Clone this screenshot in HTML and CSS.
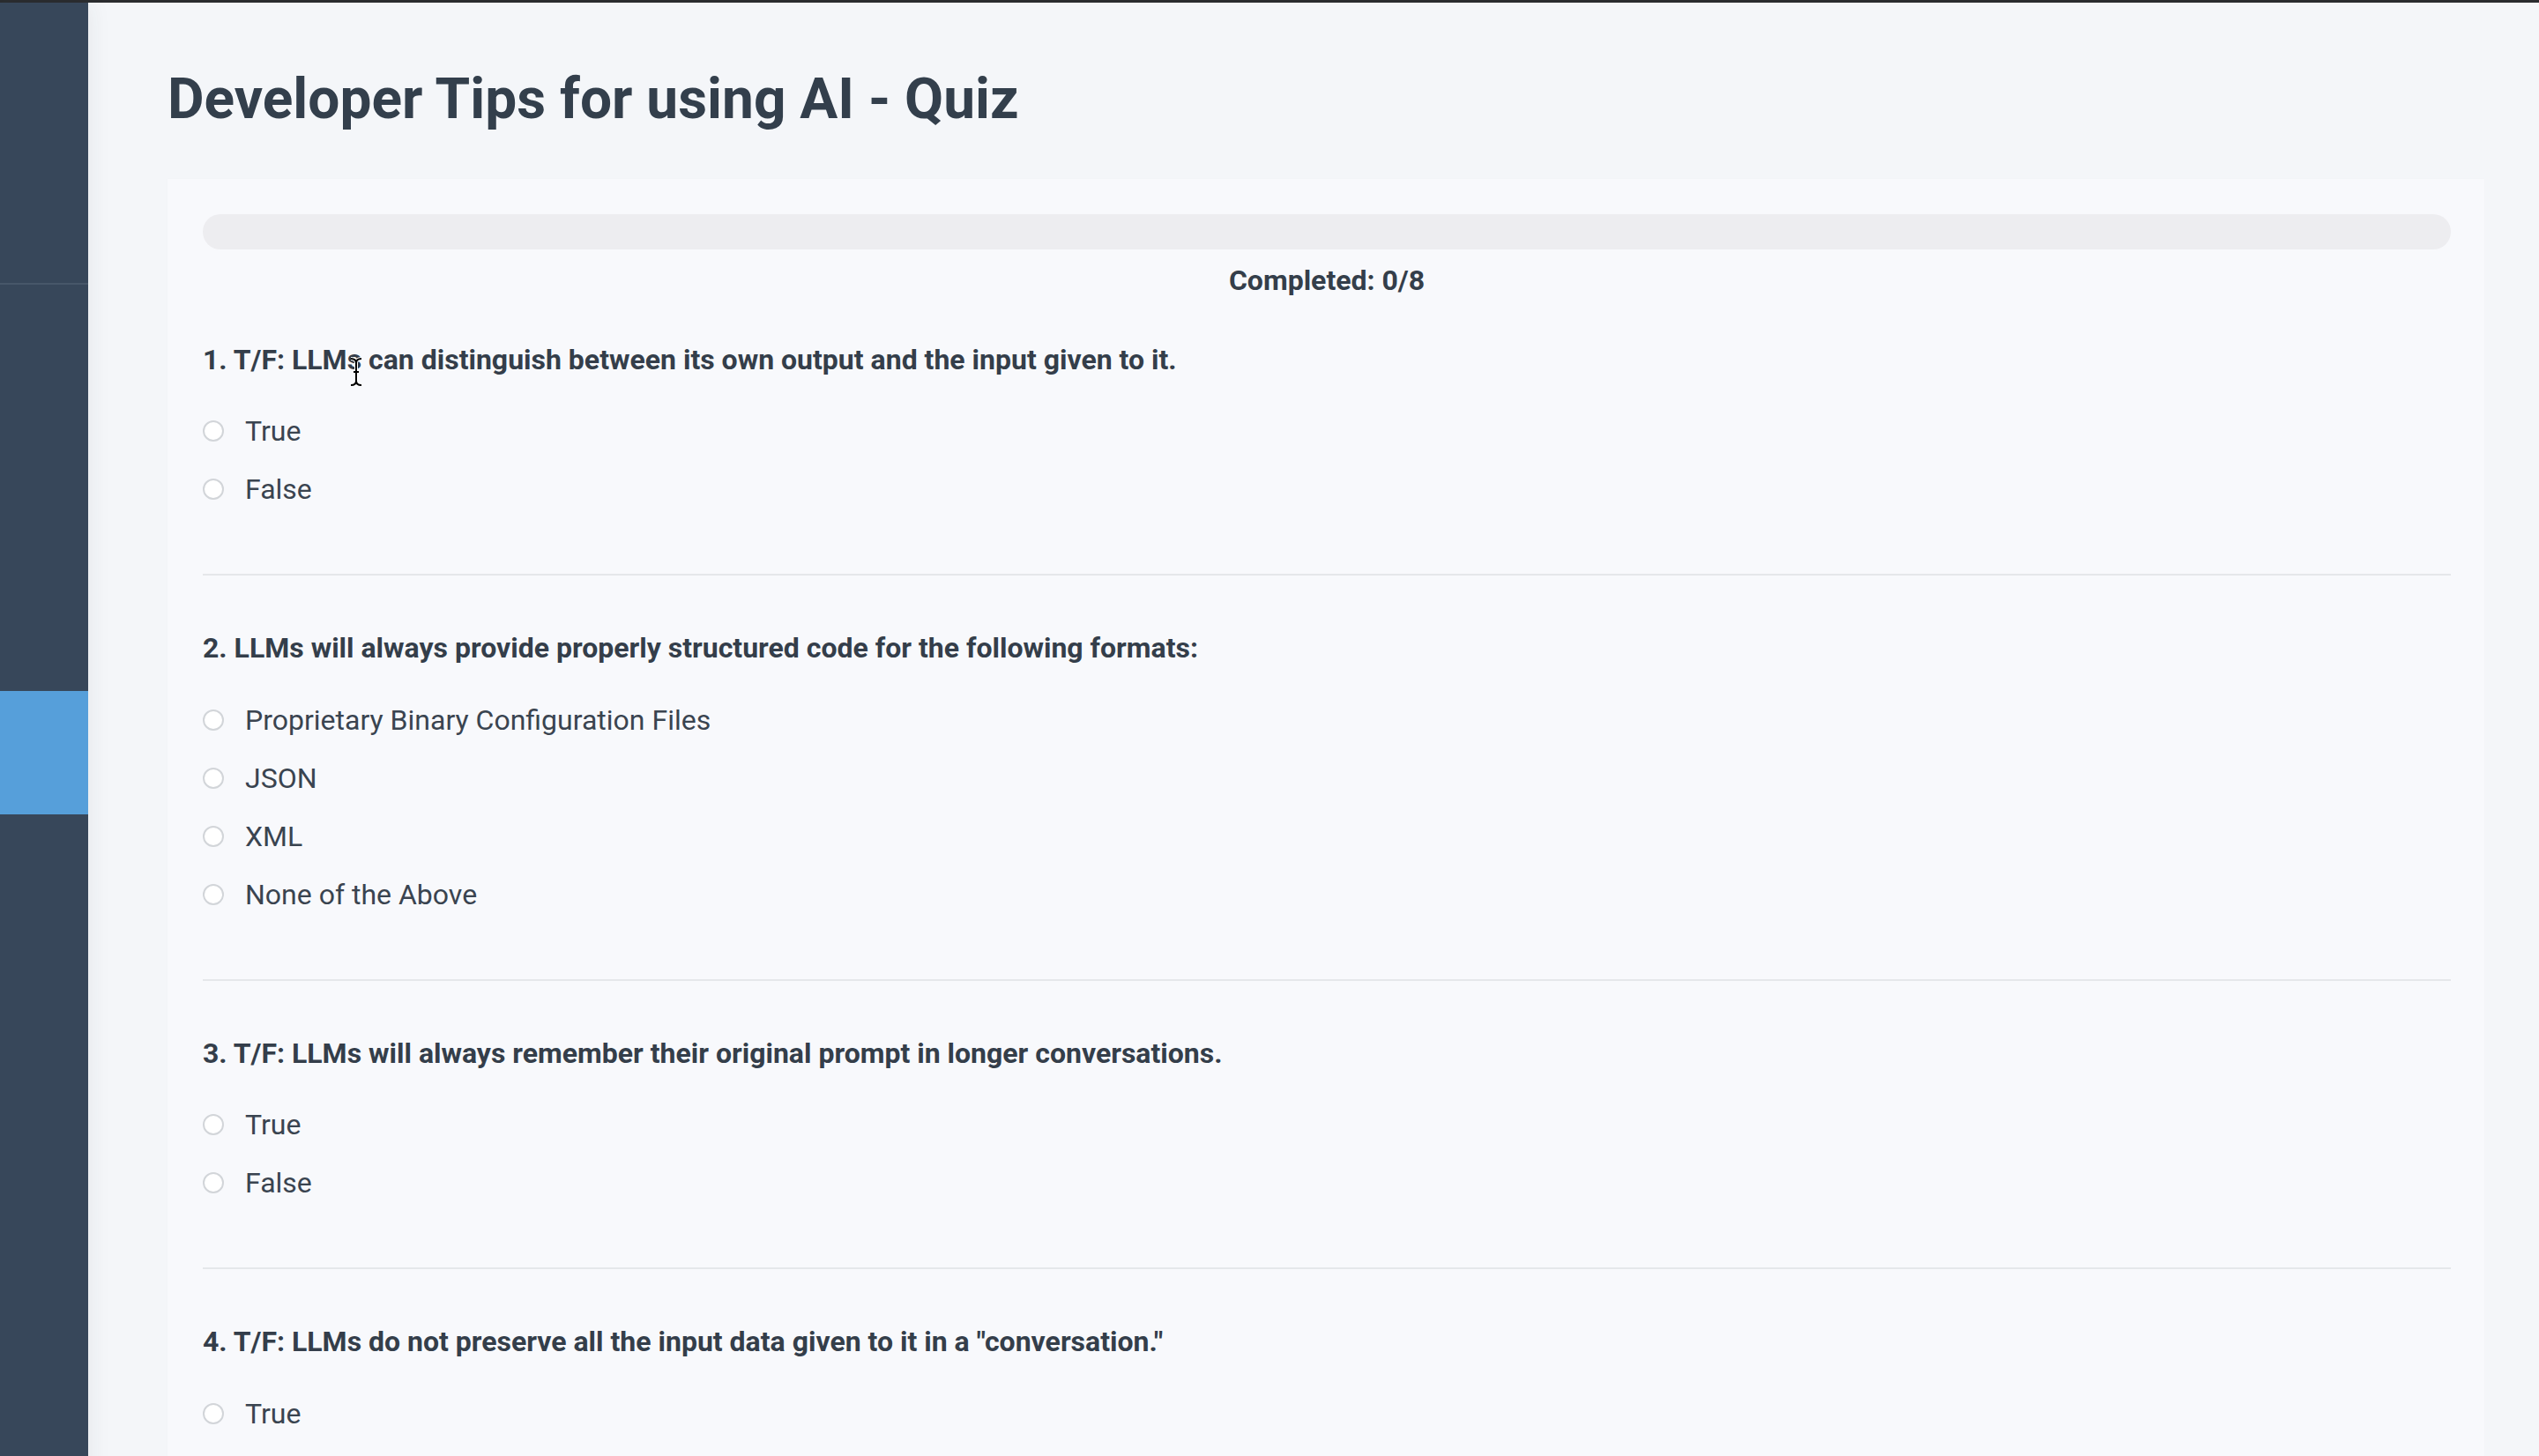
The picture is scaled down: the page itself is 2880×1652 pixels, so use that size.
FILE: index.html
```html
<!DOCTYPE html>
<html lang="en">
<head>
<meta charset="utf-8">
<title>Developer Tips for using AI - Quiz</title>
<link rel="stylesheet" href="styles.css">
</head>
<body>
<div class="app">
  <aside class="sidebar">
    <div class="side-head"></div>
    <nav class="side-nav">
      <div class="side-item active"></div>
    </nav>
  </aside>
  <main class="main">
    <h1 class="page-title">Developer Tips for using AI - Quiz</h1>
    <section class="quiz-card">
      <div class="progress-track"><div class="progress-fill" style="width:0%"></div></div>
      <p class="progress-text">Completed: 0/8</p>
      <div class="questions">
        <div class="question">
          <p class="q-title">1. T/F: LLMs can distinguish between its own output and the input given to it.<svg class="cursor" width="16" height="34" viewBox="0 0 16 34"><path d="M2 2 Q8 2 8 7 Q8 2 14 2 M8 7 V27 M2 32 Q8 32 8 27 Q8 32 14 32 M5 17 H11" fill="none" stroke="#fff" stroke-width="4"/><path d="M2 2 Q8 2 8 7 Q8 2 14 2 M8 7 V27 M2 32 Q8 32 8 27 Q8 32 14 32 M5 17 H11" fill="none" stroke="#000" stroke-width="2"/></svg></p>
          <label class="option"><input type="radio" name="q1" class="radio"><span>True</span></label>
          <label class="option"><input type="radio" name="q1" class="radio"><span>False</span></label>
        </div>
        <div class="question">
          <p class="q-title">2. LLMs will always provide properly structured code for the following formats:</p>
          <label class="option"><input type="radio" name="q2" class="radio"><span>Proprietary Binary Configuration Files</span></label>
          <label class="option"><input type="radio" name="q2" class="radio"><span>JSON</span></label>
          <label class="option"><input type="radio" name="q2" class="radio"><span>XML</span></label>
          <label class="option"><input type="radio" name="q2" class="radio"><span>None of the Above</span></label>
        </div>
        <div class="question">
          <p class="q-title">3. T/F: LLMs will always remember their original prompt in longer conversations.</p>
          <label class="option"><input type="radio" name="q3" class="radio"><span>True</span></label>
          <label class="option"><input type="radio" name="q3" class="radio"><span>False</span></label>
        </div>
        <div class="question">
          <p class="q-title">4. T/F: LLMs do not preserve all the input data given to it in a "conversation."</p>
          <label class="option"><input type="radio" name="q4" class="radio"><span>True</span></label>
        </div>
      </div>
    </section>
  </main>
</div>
</body>
</html>
```
FILE: styles.css
```css
html, body {
  margin: 0;
  padding: 0;
}
body {
  font-family: Roboto, "Liberation Sans", Arial, sans-serif;
  background: #f4f6f9;
  color: #343e4a;
  overflow: hidden;
}
.app {
  display: flex;
  min-height: 100vh;
  border-top: 3px solid #2a2c2f;
}
.sidebar {
  width: 100px;
  flex: 0 0 100px;
  background: #37475a;
  box-shadow: 2px 0 24px rgba(40, 50, 60, 0.07);
  display: flex;
  flex-direction: column;
  position: relative;
  z-index: 1;
}
.side-head {
  height: 318px;
  border-bottom: 2px solid #475769;
}
.side-nav {
  padding-top: 461px;
}
.side-item {
  height: 140px;
}
.side-item.active {
  background: #569fda;
}
.main {
  flex: 1;
  padding: 0 62px 0 90px;
  min-width: 0;
}
.page-title {
  margin: 72px 0 53px;
  font-size: 64px;
  line-height: 75px;
  font-weight: 700;
  color: #333f4c;
}
.quiz-card {
  background: #f8f9fc;
  padding: 40px 38px 40px 40px;
  box-shadow: 0 0 3px rgba(0, 0, 0, 0.02);
}
.progress-track {
  height: 40px;
  border-radius: 20px;
  background: #ededf0;
  overflow: hidden;
}
.progress-fill {
  height: 100%;
  background: #569fda;
}
.progress-text {
  margin: 17px 0 0;
  text-align: center;
  font-size: 32px;
  line-height: 37.5px;
  font-weight: 700;
  color: #343e4a;
}
.questions {
  margin-top: 52px;
}
.question {
  padding: 64px 0 63px;
  border-bottom: 2px solid #e5e7ea;
}
.question:first-child {
  padding-top: 0;
}
.q-title {
  margin: 0 0 29px;
  font-size: 32px;
  line-height: 37.5px;
  font-weight: 700;
  color: #343e4a;
  position: relative;
}
.cursor {
  position: absolute;
  left: 166px;
  top: 15px;
}
.option {
  display: flex;
  align-items: center;
  gap: 24px;
  height: 66px;
  font-size: 32px;
  color: #3a4450;
}
.radio {
  appearance: none;
  -webkit-appearance: none;
  margin: 0;
  width: 24px;
  height: 24px;
  border-radius: 50%;
  border: 2px solid #d2d5d9;
  background: #ffffff;
  box-sizing: border-box;
  flex: 0 0 24px;
}
```
